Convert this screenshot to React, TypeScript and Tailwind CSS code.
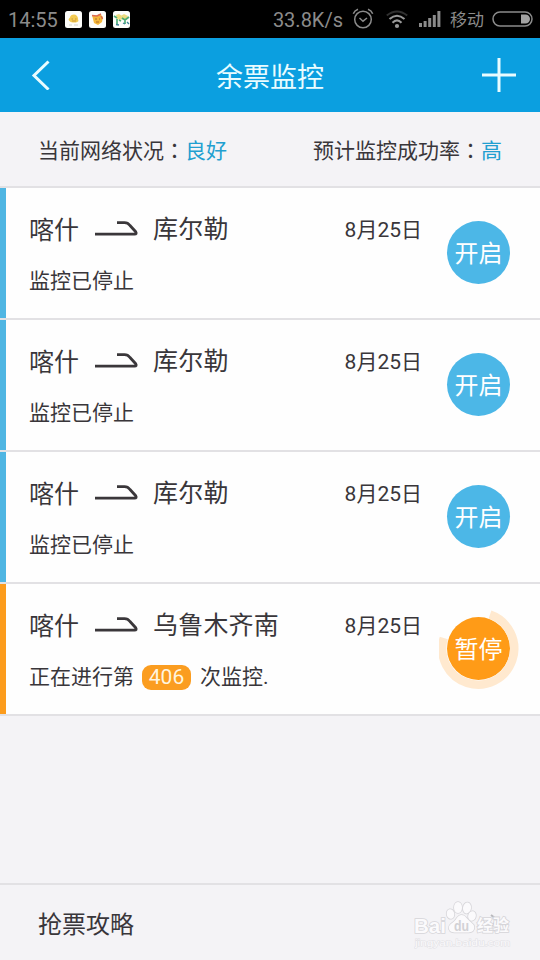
type Monitor = {
  from: string;
  to: string;
  date: string;
  count?: number;
};

const monitors: Monitor[] = [
  { from: "喀什", to: "库尔勒", date: "8月25日" },
  { from: "喀什", to: "库尔勒", date: "8月25日" },
  { from: "喀什", to: "库尔勒", date: "8月25日" },
  { from: "喀什", to: "乌鲁木齐南", date: "8月25日", count: 406 },
];

function AppBadges() {
  return (
    <div className="flex gap-[7px]">
      <svg className="h-[17px] w-[17px]" viewBox="0 0 17 17">
        <rect width="17" height="17" rx="2.5" fill="#fdfdfa" />
        <path d="M4 9.5c-1-1 0-2 1-3 0-2 2-3 4-3s4 2 4 4 1 2 0 3-3 1-5 1-3-1-4-2z" fill="#f3cb52" />
        <path d="M6.5 8h1.5M10 8h1.5M7 10h4" stroke="#c08a34" strokeWidth=".8" />
        <path d="M4 14h3M9 14h4" stroke="#cfd3cf" />
      </svg>
      <svg className="h-[17px] w-[17px]" viewBox="0 0 17 17">
        <rect width="17" height="17" rx="2.5" fill="#fdfdfa" />
        <path d="M3 4l3 1 5-2 3 3-1 5-4 3-4-2z" fill="#f4b73a" />
        <path d="M3 4.5l5 .5 4-2M12 5l1.5 3" stroke="#dc6a54" strokeWidth="1.5" fill="none" />
        <path d="M6 8h2M10 8h1M7 11h3" stroke="#a8642a" strokeWidth=".9" />
      </svg>
      <svg className="h-[17px] w-[17px]" viewBox="0 0 17 17">
        <rect width="17" height="17" rx="2.5" fill="#fdfdfa" />
        <path d="M3 4l3-1 2.5 1.5L11 3l4 2-1 3.5H4z" fill="#eddc80" />
        <path d="M1 5l3 2M4 8v5M6 9l2 1M9 7l3 2 4-3M12 9v4" stroke="#4fae78" strokeWidth="1.7" fill="none" />
        <path d="M3 13.5l3 .5M10 12l2 1M14 11l2 2" stroke="#3d8297" strokeWidth="1.3" />
      </svg>
    </div>
  );
}

function StatusBar() {
  return (
    <div className="flex h-[38px] items-center bg-black pr-[7px] pl-[8px] text-[#8b8b8b]">
      <span className="w-[57px] pt-[1px] text-[20px] leading-none">14:55</span>
      <AppBadges />
      <span className="ml-auto pt-[1px] text-[20px] leading-none">33.8K/s</span>
      <svg className="ml-[9px] h-[22px] w-[22px]" viewBox="0 0 22 22" fill="none" stroke="currentColor" strokeWidth="1.5">
        <circle cx="11" cy="11.5" r="8.3" />
        <path d="M7.5 10l3.5 3.2 4-3.2M1.3 5.8Q2.5 2.5 6 1.3M20.7 5.8Q19.5 2.5 16 1.3" />
      </svg>
      <svg className="ml-[12px] h-[19px] w-[22px]" viewBox="0 0 22 19" fill="none" strokeWidth="2.1">
        <path d="M.8 5.5Q11-2.5 21.2 5.5" stroke="#303030" />
        <path d="M3.5 9Q11 2.5 18.5 9M6.5 12.7Q11 8.2 15.5 12.7" stroke="#999" />
        <circle cx="11" cy="16" r="2.1" fill="#999" />
      </svg>
      <svg className="ml-[11px] h-[18px] w-[22px]" viewBox="0 0 22 18" fill="#8b8b8b">
        <rect x="0" y="13" width="3" height="4" />
        <rect x="4.6" y="11" width="3" height="6" />
        <rect x="9.2" y="8" width="3" height="9" />
        <rect x="13.8" y="5" width="3" height="12" />
        <rect x="18.4" y="1" width="3" height="16" />
      </svg>
      <span className="ml-[9px] pt-[2px] text-[17px] leading-none">移动</span>
      <svg className="ml-[8px] h-[16px] w-[41px]" viewBox="0 0 41 16">
        <rect x="1" y="1" width="39" height="14" rx="7" fill="none" stroke="#8b8b8b" strokeWidth="1.5" />
        <path d="M29 3.5h4.5a4.5 4.5 0 0 1 0 9H29z" fill="#a3a3a3" />
      </svg>
    </div>
  );
}

function Header() {
  return (
    <header className="flex h-[74px] items-center justify-between bg-[#0b9fe0] pr-[24px] pl-[30px] text-[#e9fcff]">
      <svg className="h-[30px] w-[36px]" viewBox="0 0 36 30" fill="none" stroke="currentColor" strokeWidth="3">
        <path d="M18.5 1.5L4 15.5l14.5 14" />
      </svg>
      <h1 className="pt-[7px] pr-[8px] text-[27px] leading-none">余票监控</h1>
      <svg className="h-[34px] w-[34px]" viewBox="0 0 34 34" stroke="currentColor" strokeWidth="3">
        <path d="M0 17h34M17 0v34" />
      </svg>
    </header>
  );
}

function SummaryItem({ label, value }: { label: string; value: string }) {
  return (
    <div className="whitespace-nowrap">
      {label}
      <span className="font-['Noto_Sans_CJK_TC',sans-serif]">：</span>
      <span className="text-[#219fd0]">{value}</span>
    </div>
  );
}

function ToggleButton({ active }: { active: boolean }) {
  return (
    <button
      className={`relative flex size-[63px] shrink-0 items-center justify-center rounded-full text-[24px] leading-none text-white ${
        active ? "bg-[#ff9b17]" : "bg-[#4cb7e7]"
      }`}
    >
      {active && (
        <svg className="absolute -top-[8px] -left-[8px] size-[80px]" viewBox="0 0 80 80" fill="none">
          <path d="M51 5.6A36 36 0 1 1 4.8 29" stroke="#ffe9cf" strokeWidth="8.5" />
        </svg>
      )}
      <span className="relative pt-[2px]">{active ? "暂停" : "开启"}</span>
    </button>
  );
}

function MonitorRow({ monitor }: { monitor: Monitor }) {
  const active = monitor.count !== undefined;
  return (
    <li
      className={`flex h-[132px] border-b-2 border-b-[#e2e1e4] bg-[#fefefe] pr-[30px] ${
        active ? "shadow-[inset_6px_0_#fc9c1c]" : "shadow-[inset_6px_0_#4fb6e3]"
      }`}
    >
      <div className="flex-1 pt-[27px] pl-[29px]">
        <div className="flex h-[28px] items-center text-[25px] leading-none">
          <span className="pt-[3px]">{monitor.from}</span>
          <svg className="-mt-[2px] ml-[16px] h-[18px] w-[43px]" viewBox="0 0 43 18" fill="none" stroke="#3a373a" strokeWidth="2.8" strokeLinejoin="round">
            <path d="M0 15.2h39.5q2.6 0 1.2-2.4l-5.7-6.3q-2.2-2.9-5.5-2.9h-7.5" />
          </svg>
          <span className="ml-[15px] tracking-[0.2px]">{monitor.to}</span>
          <span className="mr-[25px] ml-auto pt-[2px] text-[21px]">{monitor.date}</span>
        </div>
        <div className="mt-[25px] flex h-[26px] items-center text-[21px] leading-none">
          {active ? (
            <>
              正在进行第
              <span className="mr-[9px] ml-[8px] flex h-[25px] w-[49px] items-center justify-center rounded-[9px] bg-[#fb9d20] text-[21px] text-[#fff5df]">
                {monitor.count}
              </span>
              次监控.
            </>
          ) : (
            "监控已停止"
          )}
        </div>
      </div>
      <div className="pt-[33px]">
        <ToggleButton active={active} />
      </div>
    </li>
  );
}

function Watermark() {
  return (
    <svg className="absolute right-[28px] bottom-[10px] h-[52px] w-[98px]" viewBox="0 0 98 52">
      <path d="M77 17l7 5.5-7 5.5" fill="none" stroke="#b9b8bc" strokeWidth="2" />
      <g fill="#fbfafc" stroke="#d6d5d9" strokeWidth="1.6" paintOrder="stroke">
        <ellipse cx="36.5" cy="16" rx="3.8" ry="4.8" transform="rotate(-10 36.5 16)" />
        <ellipse cx="44" cy="9.5" rx="4" ry="5.5" />
        <ellipse cx="53" cy="10" rx="4" ry="5.5" transform="rotate(10 53 10)" />
        <ellipse cx="58" cy="18" rx="3.8" ry="4.8" transform="rotate(15 58 18)" />
        <path d="M47.5 17c4 0 5 3.500 8.500 6.500s5 4 4 7.500c-1 4-6 3.500-12.500 3.500s-11.500.5-12.500-3.500c-1-3.500 2-5 5-7.500s3.500-6.500 7.500-6.500z" />
        <text x="0" y="34.5" fontSize="21" fontWeight="bold" fontFamily="Liberation Sans, sans-serif" textLength="32" lengthAdjust="spacingAndGlyphs">Bai</text>
        <text x="63" y="33" fontSize="16" fontWeight="bold" fontFamily="Noto Sans CJK SC, sans-serif" textLength="32" lengthAdjust="spacingAndGlyphs">经验</text>
        <text x="1" y="47.5" fontSize="9.5" strokeWidth="1" stroke="#e2e1e5" fontFamily="Liberation Sans, sans-serif" textLength="95" lengthAdjust="spacingAndGlyphs">jingyan.baidu.com</text>
      </g>
      <text x="40" y="32.500" fontSize="14" fontWeight="bold" fill="#d2d1d5" fontFamily="Liberation Sans, sans-serif" textLength="15" lengthAdjust="spacingAndGlyphs">du</text>
    </svg>
  );
}

export default function App() {
  return (
    <div className="flex h-[960px] w-[540px] flex-col overflow-hidden bg-[#f4f3f6] font-['Roboto','Noto_Sans_CJK_SC',sans-serif] text-[#39363a]">
      <StatusBar />
      <Header />
      <section className="flex h-[76px] items-center justify-between border-b-2 border-[#e2e1e4] px-[38px] pt-[3px] text-[21px] leading-none">
        <SummaryItem label="当前网络状况" value="良好" />
        <SummaryItem label="预计监控成功率" value="高" />
      </section>
      <ul>
        {monitors.map((monitor, i) => (
          <MonitorRow key={i} monitor={monitor} />
        ))}
      </ul>
      <footer className="relative mt-auto flex h-[77px] items-center border-t-2 border-[#e2e1e4] pt-[5px] pl-[38px] text-[24px] leading-none">
        抢票攻略
        <Watermark />
      </footer>
    </div>
  );
}
